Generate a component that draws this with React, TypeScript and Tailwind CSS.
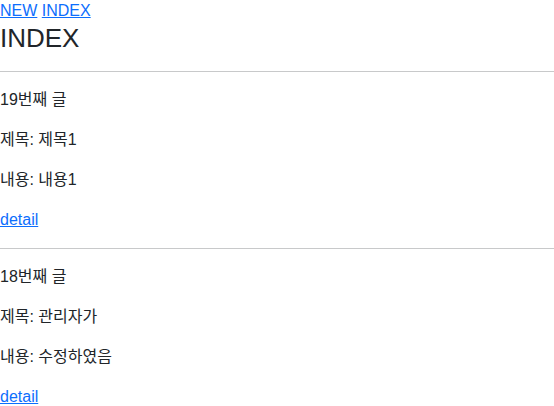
const posts = [
  { id: 19, title: "제목1", content: "내용1" },
  { id: 18, title: "관리자가", content: "수정하였음" },
];

export default function App() {
  return (
    <div
      className="min-h-screen bg-white text-[16px] leading-[24px] text-[#212529]"
      style={{ fontFamily: '"Liberation Sans", "Noto Sans CJK KR", sans-serif' }}
    >
      <div className="h-[21px] leading-[21px]">
        <a href="#" className="text-[#0d6efd] underline">NEW</a>{" "}
        <a href="#" className="text-[#0d6efd] underline">INDEX</a>
      </div>
      <h1 className="text-[26px] leading-[34px] font-normal">INDEX</h1>
      {posts.map((p) => (
        <div key={p.id}>
          <hr className="mt-4 mb-4 border-t border-[#c8c9ca]" />
          <p className="mb-4">{p.id}번째 글</p>
          <p className="mb-4">제목: {p.title}</p>
          <p className="mb-4">내용: {p.content}</p>
          <p>
            <a href="#" className="text-[#0d6efd] underline">detail</a>
          </p>
        </div>
      ))}
    </div>
  );
}
